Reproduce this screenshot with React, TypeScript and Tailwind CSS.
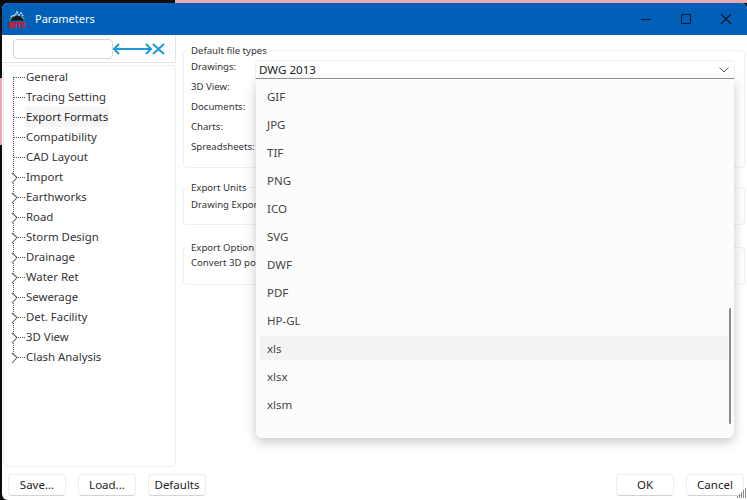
import React from 'react';

const treeItems = [
  { label: 'General' },
  { label: 'Tracing Setting' },
  { label: 'Export Formats', selected: true },
  { label: 'Compatibility' },
  { label: 'CAD Layout' },
  { label: 'Import', expandable: true },
  { label: 'Earthworks', expandable: true },
  { label: 'Road', expandable: true },
  { label: 'Storm Design', expandable: true },
  { label: 'Drainage', expandable: true },
  { label: 'Water Ret', expandable: true },
  { label: 'Sewerage', expandable: true },
  { label: 'Det. Facility', expandable: true },
  { label: '3D View', expandable: true },
  { label: 'Clash Analysis', expandable: true },
];

const fileTypes = ['Drawings:', '3D View:', 'Documents:', 'Charts:', 'Spreadsheets:'];
const formats = ['GIF', 'JPG', 'TIF', 'PNG', 'ICO', 'SVG', 'DWF', 'PDF', 'HP-GL', 'xls', 'xlsx', 'xlsm'];

const Logo = () => (
  <svg width="18" height="19" viewBox="0 0 18 19" className="overflow-visible">
    <path d="M2 10.5 Q9 1 16 10.5 Z" fill="#151515" />
    <path d="M3 7 L5 5 L7 6 L9 2 L11 5 L13 3 L15 6" fill="none" stroke="#d5e4ee" strokeWidth="1.5" strokeDasharray="2 1" />
    <path d="M1.5 10 L4 7 M14 6 L16.5 10" stroke="#3fae5a" strokeWidth="1.4" />
    <text x="9" y="18" textAnchor="middle" fontSize="9" fontWeight="700" fill="#e0141c" stroke="#e0141c" strokeWidth="0.3" fontFamily="Liberation Sans, sans-serif" textLength="17" lengthAdjust="spacingAndGlyphs">MITS</text>
  </svg>
);

const DialogButton = ({ label, width }: { label: string; width: string }) => (
  <button className={`${width} h-[22px] rounded-[4px] border border-[#ececec] border-b-[#d4d4d4] bg-white text-[11.5px] text-[#222] flex items-center justify-center`}>
    {label}
  </button>
);

const GroupBox = ({ title, className, children }: { title: string; className: string; children: React.ReactNode }) => (
  <div className={`relative shrink-0 rounded-[4px] border border-[#efefef] pl-[7px] ${className}`}>
    <span className="absolute -top-[7px] left-[4px] bg-white px-[3px] text-[9.6px] leading-[14px] text-[#333]">{title}</span>
    {children}
  </div>
);

export default function App() {
  return (
    <div className="relative w-[747px] h-[500px] overflow-hidden bg-[#0c0c0c] font-['Noto_Sans','Open_Sans',sans-serif]">
      {/* desktop showing around the window */}
      <div className="absolute left-0 top-[78px] w-[2px] h-[67px] bg-[#e8a9b0]" />
      <div className="h-[3px] flex">
        <div className="w-[175px] bg-[#0c0c0c]" />
        <div className="flex-1 bg-[#e8a9b0]" />
      </div>

      <div className="ml-[2px] h-[497px] rounded-t-[6px] rounded-bl-[6px] bg-white flex flex-col">
        {/* title bar */}
        <div className="h-[32px] shrink-0 rounded-t-[6px] bg-[#0060b8] flex items-center">
          <div className="ml-[5px] w-[20px] flex justify-center"><Logo /></div>
          <span className="ml-[8px] text-[11px] text-white">Parameters</span>
          <div className="ml-auto flex items-center text-[#0a1428]">
            <svg width="12" height="12" viewBox="0 0 12 12" className="mr-[28px]"><path d="M1 6.5H11" stroke="currentColor" strokeWidth="1.1" /></svg>
            <svg width="12" height="12" viewBox="0 0 12 12" className="mr-[28px]"><rect x="1.5" y="1.5" width="9" height="9" rx="1" fill="none" stroke="currentColor" strokeWidth="1.1" /></svg>
            <svg width="12" height="12" viewBox="0 0 12 12" className="mr-[15px]"><path d="M1 1L11 11M11 1L1 11" stroke="currentColor" strokeWidth="1.1" /></svg>
          </div>
        </div>

        <div className="flex flex-1 min-h-0">
          {/* left column */}
          <div className="w-[174px] shrink-0 flex flex-col">
            <div className="h-[28px] shrink-0 border-b border-r border-[#e4e4e4] flex items-center pl-[11px]">
              <div className="w-[100px] h-[20px] rounded-[4px] border border-[#d6d6d6] bg-white" />
              <svg width="53" height="16" viewBox="0 0 53 16" className="text-[#1d9ad6]">
                <path d="M1 8H38M6 3L1 8L6 13M33 3L38 8L33 13M40 3L51 13M51 3L40 13" fill="none" stroke="currentColor" strokeWidth="2" />
              </svg>
            </div>
            <div className="mt-[2px] ml-[1px] h-[402px] rounded-[4px] border border-[#efefef] pt-[1px] pl-[9px] relative">
              <div className="absolute left-[9px] top-[11px] h-[283px] border-l border-dotted border-[#555]" />
              {treeItems.map((item) => (
                <div key={item.label} className="relative h-[20px] flex items-center">
                  <div className="w-[11px] ml-[1px] border-t border-dotted border-[#555]" />
                  {item.expandable && (
                    <svg width="7" height="12" viewBox="0 0 7 12" className="absolute left-[-2px] top-[5px]">
                      <path d="M1 1L6 5.5L1 11" fill="#fff" stroke="#666" strokeWidth="1.1" />
                    </svg>
                  )}
                  <span className={`px-[1px] text-[11.4px] leading-[20px] ${item.selected ? 'bg-[#f6f6f6] text-[#222]' : 'text-[#333]'}`}>
                    {item.label}
                  </span>
                </div>
              ))}
            </div>
          </div>

          {/* right column */}
          <div className="flex-1 min-w-0 pl-[7px] pr-[2px] pt-[15px] flex flex-col">
            <GroupBox title="Default file types" className="h-[118px]">
              <div className="flex flex-col pt-[6px]">
                {fileTypes.map((t) => (
                  <div key={t} className="h-[20px] text-[9.6px] leading-[20px] text-[#333]">{t}</div>
                ))}
              </div>
            </GroupBox>
            <GroupBox title="Export Units" className="mt-[19px] h-[38px]">
              <div className="pt-[7px] text-[9.6px] leading-[20px] text-[#333]">Drawing Export</div>
            </GroupBox>
            <GroupBox title="Export Option" className="mt-[22px] h-[38px]">
              <div className="pt-[5px] text-[9.6px] leading-[20px] text-[#333]">Convert 3D points</div>
            </GroupBox>
          </div>
        </div>

        {/* footer */}
        <div className="h-[33px] shrink-0 flex items-start pt-[7px] pl-[6px] pr-[3px]">
          <div className="flex gap-[12px]">
            <DialogButton label="Save..." width="w-[58px]" />
            <DialogButton label="Load..." width="w-[58px]" />
            <DialogButton label="Defaults" width="w-[58px]" />
          </div>
          <div className="ml-auto flex gap-[12px]">
            <DialogButton label="OK" width="w-[58px]" />
            <DialogButton label="Cancel" width="w-[58px]" />
          </div>
        </div>
      </div>

      {/* combo box with open list */}
      <div className="absolute left-[255px] top-[60px] w-[480px] h-[19px] rounded-t-[4px] border border-[#efefef] border-b-[#999] bg-white flex items-center pl-[3px] text-[11.6px] text-[#222]">
        DWG 2013
        <svg width="10" height="6" viewBox="0 0 10 6" className="ml-auto mr-[5px]"><path d="M0.5 0.5L5 5L9.5 0.5" fill="none" stroke="#555" strokeWidth="1" /></svg>
      </div>
      <div className="absolute left-[256px] top-[79px] w-[478px] h-[359px] rounded-b-[6px] bg-[#fcfcfc] shadow-[0_4px_12px_rgba(0,0,0,0.22)] pt-[3px] px-[4px]">
        {formats.map((f) => (
          <div key={f} className="h-[28px] py-[2px] mr-[2px]">
            <div className={`h-[24px] rounded-[4px] pl-[7px] text-[11.5px] leading-[26px] text-[#444] ${f === 'xls' ? 'bg-[#f3f3f3]' : ''}`}>
              {f}
            </div>
          </div>
        ))}
        <div className="absolute right-[3px] top-[229px] w-[2px] h-[116px] rounded-full bg-[#8a8a8a]" />
      </div>

      {/* corner of the window behind */}
      <svg width="10" height="10" viewBox="0 0 10 10" className="absolute right-0 bottom-[2px] text-[#222]">
        <path d="M8 1H10M6 3H10M4 5H10M2 7H10M0 9H10" stroke="currentColor" strokeWidth="1" strokeDasharray="1 1" />
      </svg>
    </div>
  );
}
